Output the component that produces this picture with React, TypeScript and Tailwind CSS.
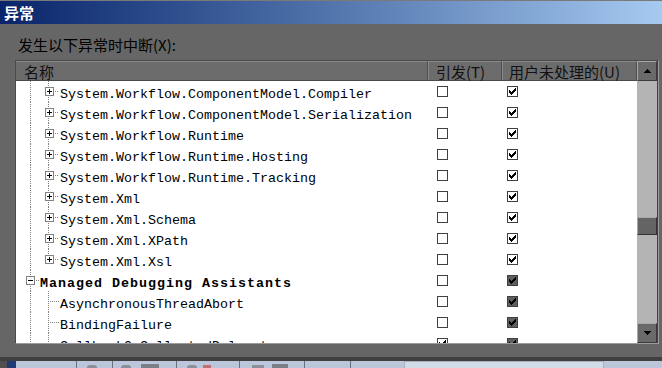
import React from "react";

type Kind = "d1" | "d1last" | "root" | "child";
const rows: { t: string; kind: Kind; c1: boolean; dark: boolean }[] = [
  { t: "System.Workflow.ComponentModel.Compiler", kind: "d1", c1: false, dark: false },
  { t: "System.Workflow.ComponentModel.Serialization", kind: "d1", c1: false, dark: false },
  { t: "System.Workflow.Runtime", kind: "d1", c1: false, dark: false },
  { t: "System.Workflow.Runtime.Hosting", kind: "d1", c1: false, dark: false },
  { t: "System.Workflow.Runtime.Tracking", kind: "d1", c1: false, dark: false },
  { t: "System.Xml", kind: "d1", c1: false, dark: false },
  { t: "System.Xml.Schema", kind: "d1", c1: false, dark: false },
  { t: "System.Xml.XPath", kind: "d1", c1: false, dark: false },
  { t: "System.Xml.Xsl", kind: "d1last", c1: false, dark: false },
  { t: "Managed Debugging Assistants", kind: "root", c1: false, dark: true },
  { t: "AsynchronousThreadAbort", kind: "child", c1: false, dark: true },
  { t: "BindingFailure", kind: "child", c1: false, dark: true },
  { t: "CallbackOnCollectedDelegate", kind: "child", c1: true, dark: true },
];

const checkPixels: [number, number][] = [
  [6, 0],
  [5, 1], [6, 1],
  [0, 2], [4, 2], [5, 2], [6, 2],
  [0, 3], [1, 3], [3, 3], [4, 3], [5, 3],
  [0, 4], [1, 4], [2, 4], [3, 4], [4, 4],
  [1, 5], [2, 5], [3, 5],
  [2, 6],
];
const checkPath = checkPixels.map(([x, y]) => `M${x + 2} ${y + 2}h1v1h-1z`).join("");

function Check({ on, dark }: { on: boolean; dark?: boolean }) {
  return (
    <svg width="11" height="11" viewBox="0 0 11 11" shapeRendering="crispEdges" className="block">
      <rect x="0.5" y="0.5" width="10" height="10" fill={dark ? "#5e5e5e" : "#ffffff"} stroke="#404040" />
      {on && <path d={checkPath} fill="#000" />}
    </svg>
  );
}

function Box({ plus }: { plus: boolean }) {
  return (
    <svg width="9" height="9" viewBox="0 0 9 9" shapeRendering="crispEdges" className="block">
      <rect x="0.5" y="0.5" width="8" height="8" fill="#fff" stroke="#808080" />
      <path d="M2 4h5v1h-5z" fill="#000" />
      {plus && <path d="M4 2h1v5h-1z" fill="#000" />}
    </svg>
  );
}

const vDots =
  "absolute w-px bg-[repeating-linear-gradient(to_bottom,#808080_0_1px,transparent_1px_2px)]";
const hDots =
  "absolute h-px bg-[repeating-linear-gradient(to_right,#808080_0_1px,transparent_1px_2px)]";

function Row({ r }: { r: (typeof rows)[number] }) {
  const textLeft = r.kind === "root" ? "left-[24px]" : "left-[44px]";
  return (
    <div className="flex h-[21px] shrink-0">
      <div className="relative w-[412px] h-[21px]">
        <div className={`${vDots} left-[14px] top-0 h-[21px]`} />
        {(r.kind === "d1" || r.kind === "child") && <div className={`${vDots} left-[32px] top-0 h-[21px]`} />}
        {r.kind === "d1last" && <div className={`${vDots} left-[32px] top-0 h-[11px]`} />}
        {(r.kind === "d1" || r.kind === "d1last") && (
          <>
            <div className="absolute left-[29px] top-[6px]">
              <Box plus />
            </div>
            <div className={`${hDots} left-[39px] top-[10px] w-[4px]`} />
          </>
        )}
        {r.kind === "root" && (
          <>
            <div className="absolute left-[10px] top-[6px]">
              <Box plus={false} />
            </div>
            <div className={`${hDots} left-[20px] top-[10px] w-[4px]`} />
          </>
        )}
        {r.kind === "child" && <div className={`${hDots} left-[34px] top-[10px] w-[9px]`} />}
        <div
          className={`absolute ${textLeft} top-0 whitespace-nowrap text-black text-[13.33px] leading-[27px] ${
            r.kind === "root" ? "font-bold tracking-[1px]" : ""
          }`}
          style={{ fontFamily: '"Liberation Mono", "DejaVu Sans Mono", monospace' }}
        >
          {r.t}
        </div>
      </div>
      <div className="w-[74px] pl-[9px] pt-[5px]">
        <Check on={r.c1} />
      </div>
      <div className="flex-1 pl-[5px] pt-[5px]">
        <Check on dark={r.dark} />
      </div>
    </div>
  );
}

function Arrow({ up }: { up: boolean }) {
  return (
    <svg width="7" height="4" viewBox="0 0 7 4" shapeRendering="crispEdges" className="block">
      {up ? <path d="M3 0h1v1h1v1h1v1h1v1h-7v-1h1v-1h1v-1h1z" fill="#000" /> : <path d="M0 0h7v1h-1v1h-1v1h-1v1h-1v-1h-1v-1h-1v-1h-1z" fill="#000" />}
    </svg>
  );
}

export default function App() {
  const cjk = { fontFamily: '"Noto Sans CJK SC", "Noto Sans", sans-serif' };
  return (
    <div className="w-[662px] h-[368px] overflow-hidden bg-[#666666] flex flex-col" style={cjk}>
      <div className="h-px bg-[#7a7a7a] shrink-0" />
      <div className="h-[23px] shrink-0 bg-gradient-to-r from-[#0a246a] to-[#a6caf0] flex items-center pl-[4px]">
        <span className="text-white font-bold text-[15px] leading-[15px]">异常</span>
      </div>
      <div className="h-[333px] shrink-0 flex flex-col pl-[15px]">
        <div className="mt-[12px] h-[17px] pl-[3px] text-[15px] leading-[17px] text-black whitespace-nowrap">
          发生以下异常时中断(X):
        </div>
        <div className="mt-[7px] w-[644px] h-[284px] border-l border-t border-[#4a4a4a] border-r-[#9c9c9c] border-b-[#9c9c9c] border-r border-b flex">
          <div className="w-[621px] flex flex-col">
            <div className="h-[20px] shrink-0 flex bg-[#6c6c6c] border-b border-[#4a4a4a] text-[15px] text-[#111] leading-[19px]">
              <div className="w-[412px] pl-[8px] border-r border-[#4e4e4e] border-t border-t-[#8a8a8a]">名称</div>
              <div className="w-[74px] pl-[7px] border-r border-[#4e4e4e] border-l border-l-[#8a8a8a] border-t border-t-[#8a8a8a]">引发(T)</div>
              <div className="flex-1 pl-[6px] border-l border-l-[#8a8a8a] border-t border-t-[#8a8a8a] border-r border-r-[#4e4e4e] whitespace-nowrap">用户未处理的(U)</div>
            </div>
            <div className="flex-1 bg-white overflow-hidden flex flex-col">
              {rows.map((r, i) => (
                <Row key={i} r={r} />
              ))}
            </div>
          </div>
          <div className="w-[20px] flex flex-col bg-[#b4b4b4]">
            <div className="h-[20px] shrink-0 bg-[#6a6a6a] border border-t-[#a8a8a8] border-l-[#a8a8a8] border-r-[#3a3a3a] border-b-[#3a3a3a] flex items-center justify-center">
              <Arrow up />
            </div>
            <div className="h-[136px] shrink-0" />
            <div className="h-[18px] shrink-0 bg-[#646464] border border-t-[#a8a8a8] border-l-[#a8a8a8] border-r-[#333333] border-b-[#333333]" />
            <div className="flex-1" />
            <div className="h-[20px] shrink-0 bg-[#6a6a6a] border border-t-[#a8a8a8] border-l-[#a8a8a8] border-r-[#3a3a3a] border-b-[#3a3a3a] flex items-center justify-center">
              <Arrow up={false} />
            </div>
          </div>
          <div className="w-px bg-[#404040]" />
        </div>
      </div>
      <div className="h-[4px] shrink-0 bg-[#404040]" />
      <div className="h-[7px] shrink-0 flex bg-[#bcc6da]">
        <div className="w-[7px] bg-[#505050]" />
        <div className="w-[9px] bg-[#1f3a74]" />
        <div className="w-[61px] border-r border-[#6a7080]" />
        <div className="w-[36px] border-r border-[#6a7080] flex items-end pl-[10px]">
          <div className="w-[10px] h-[3px] bg-[#8a8f9a] rounded-t" />
        </div>
        <div className="w-[64px] border-r border-[#6a7080] flex items-end gap-[10px] pl-[8px]">
          <div className="w-[10px] h-[3px] bg-[#8a8f9a] rounded-t" />
          <div className="w-[18px] h-[4px] bg-[#7a7f8a]" />
        </div>
        <div className="w-[63px] border-r border-[#6a7080] flex items-end gap-[6px] pl-[10px]">
          <div className="w-[10px] h-[3px] bg-[#8a8f9a] rounded-t" />
          <div className="w-[8px] h-[3px] bg-[#c07070]" />
        </div>
        <div className="w-[65px] border-r border-[#6a7080] flex items-end gap-[8px] pl-[12px]">
          <div className="w-[12px] h-[3px] bg-[#8a8f9a]" />
          <div className="w-[16px] h-[4px] bg-[#7a7f8a]" />
        </div>
        <div className="w-[46px] border-r border-[#6a7080]" />
        <div className="w-[53px]" />
        <div className="w-[200px] bg-[#d4dbe8] border-t border-x border-[#a8b0c0]" />
      </div>
    </div>
  );
}
